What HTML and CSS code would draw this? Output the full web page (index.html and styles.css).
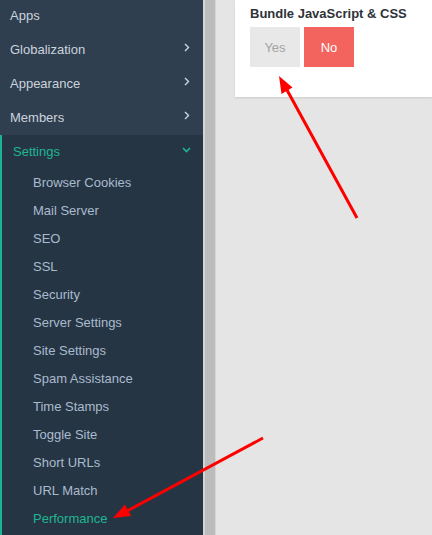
FILE: index.html
```html
<!DOCTYPE html>
<html>
<head>
<meta charset="utf-8">
<link rel="stylesheet" href="styles.css">
</head>
<body>
<div class="page">
  <nav class="sidebar">
    <ul class="menu">
      <li class="item first"><span>Apps</span></li>
      <li class="item"><span>Globalization</span><svg class="chev" width="6" height="9" viewBox="0 0 6 9"><path d="M1 1 L4.5 4.5 L1 8" fill="none" stroke="#cdd5de" stroke-width="1.4"/></svg></li>
      <li class="item"><span>Appearance</span><svg class="chev" width="6" height="9" viewBox="0 0 6 9"><path d="M1 1 L4.5 4.5 L1 8" fill="none" stroke="#cdd5de" stroke-width="1.4"/></svg></li>
      <li class="item"><span>Members</span><svg class="chev" width="6" height="9" viewBox="0 0 6 9"><path d="M1 1 L4.5 4.5 L1 8" fill="none" stroke="#cdd5de" stroke-width="1.4"/></svg></li>
    </ul>
    <div class="group">
      <div class="group-head"><span>Settings</span><svg class="chev-down" width="9" height="6" viewBox="0 0 9 6"><path d="M1 1 L4.5 4.5 L8 1" fill="none" stroke="#1fb592" stroke-width="1.6"/></svg></div>
      <ul class="sub">
        <li>Browser Cookies</li>
        <li>Mail Server</li>
        <li>SEO</li>
        <li>SSL</li>
        <li>Security</li>
        <li>Server Settings</li>
        <li>Site Settings</li>
        <li>Spam Assistance</li>
        <li>Time Stamps</li>
        <li>Toggle Site</li>
        <li>Short URLs</li>
        <li>URL Match</li>
        <li class="active">Performance</li>
      </ul>
    </div>
  </nav>
  <div class="divider"></div>
  <div class="scroll"></div>
  <main class="main">
    <section class="card">
      <h3 class="title">Bundle JavaScript &amp; CSS</h3>
      <div class="toggle">
        <button class="btn yes">Yes</button>
        <button class="btn no">No</button>
      </div>
    </section>
  </main>
</div>
<svg class="arrows" width="432" height="535" viewBox="0 0 432 535">
  <line x1="357" y1="218" x2="287" y2="90" stroke="#ff0000" stroke-width="3"/>
  <polygon points="279,76 292.5,87.5 281.5,94" fill="#ff0000"/>
  <line x1="263" y1="438" x2="127" y2="511" stroke="#ff0000" stroke-width="3"/>
  <polygon points="113,518 125,504.5 131,516" fill="#ff0000"/>
</svg>
</body>
</html>
```
FILE: styles.css
```css
* { box-sizing: border-box; }
html, body { margin: 0; padding: 0; }
body {
  width: 432px;
  height: 535px;
  overflow: hidden;
  font-family: "Liberation Sans", Arial, sans-serif;
  font-size: 13px;
  background: #e5e5e5;
  position: relative;
}
.page {
  display: flex;
  height: 535px;
}
.sidebar {
  width: 203px;
  flex: none;
  background: #263544;
  display: flex;
  flex-direction: column;
}
.menu, .sub {
  list-style: none;
  margin: 0;
  padding: 0;
}
.menu {
  background: #2f3f50;
}
.item {
  height: 34px;
  display: flex;
  align-items: center;
  justify-content: space-between;
  padding: 0 13px 2px 10px;
  color: #cbd3dc;
}
.item.first {
  margin-top: -1px;
}
.chev {
  margin-top: -3px;
}
.group {
  flex: 1;
  border-left: 2px solid #1bb490;
}
.group-head {
  height: 33px;
  display: flex;
  align-items: center;
  justify-content: space-between;
  padding: 0 12px 0 11px;
  color: #1fb592;
}
.chev-down {
  margin-top: -3px;
}
.sub {
  padding-top: 1px;
}
.sub li {
  height: 28px;
  line-height: 28px;
  padding-left: 31px;
  color: #a9bbce;
}
.sub li.active {
  color: #1fb592;
}
.divider {
  width: 2px;
  flex: none;
  background: #d4d4d4;
}
.scroll {
  width: 11px;
  flex: none;
  background: #bcbcbc;
  border-right: 1px solid #d6d6d6;
}
.main {
  flex: 1;
  padding-left: 19px;
}
.card {
  background: #ffffff;
  padding: 6px 15px 30px 15px;
  box-shadow: 0 1px 2px rgba(0,0,0,0.12);
}
.title {
  margin: 0 0 5px 0;
  font-size: 13px;
  font-weight: bold;
  color: #2e323a;
  line-height: 16px;
}
.toggle {
  display: flex;
  gap: 4px;
}
.btn {
  width: 50px;
  height: 40px;
  border: none;
  font-family: "Liberation Sans", Arial, sans-serif;
  font-size: 13px;
  padding: 0;
}
.btn.yes {
  background: #e8e8e8;
  color: #a3a3a3;
}
.btn.no {
  background: #f4645f;
  color: #ffffff;
}
.arrows {
  position: absolute;
  left: 0;
  top: 0;
  pointer-events: none;
}
```
